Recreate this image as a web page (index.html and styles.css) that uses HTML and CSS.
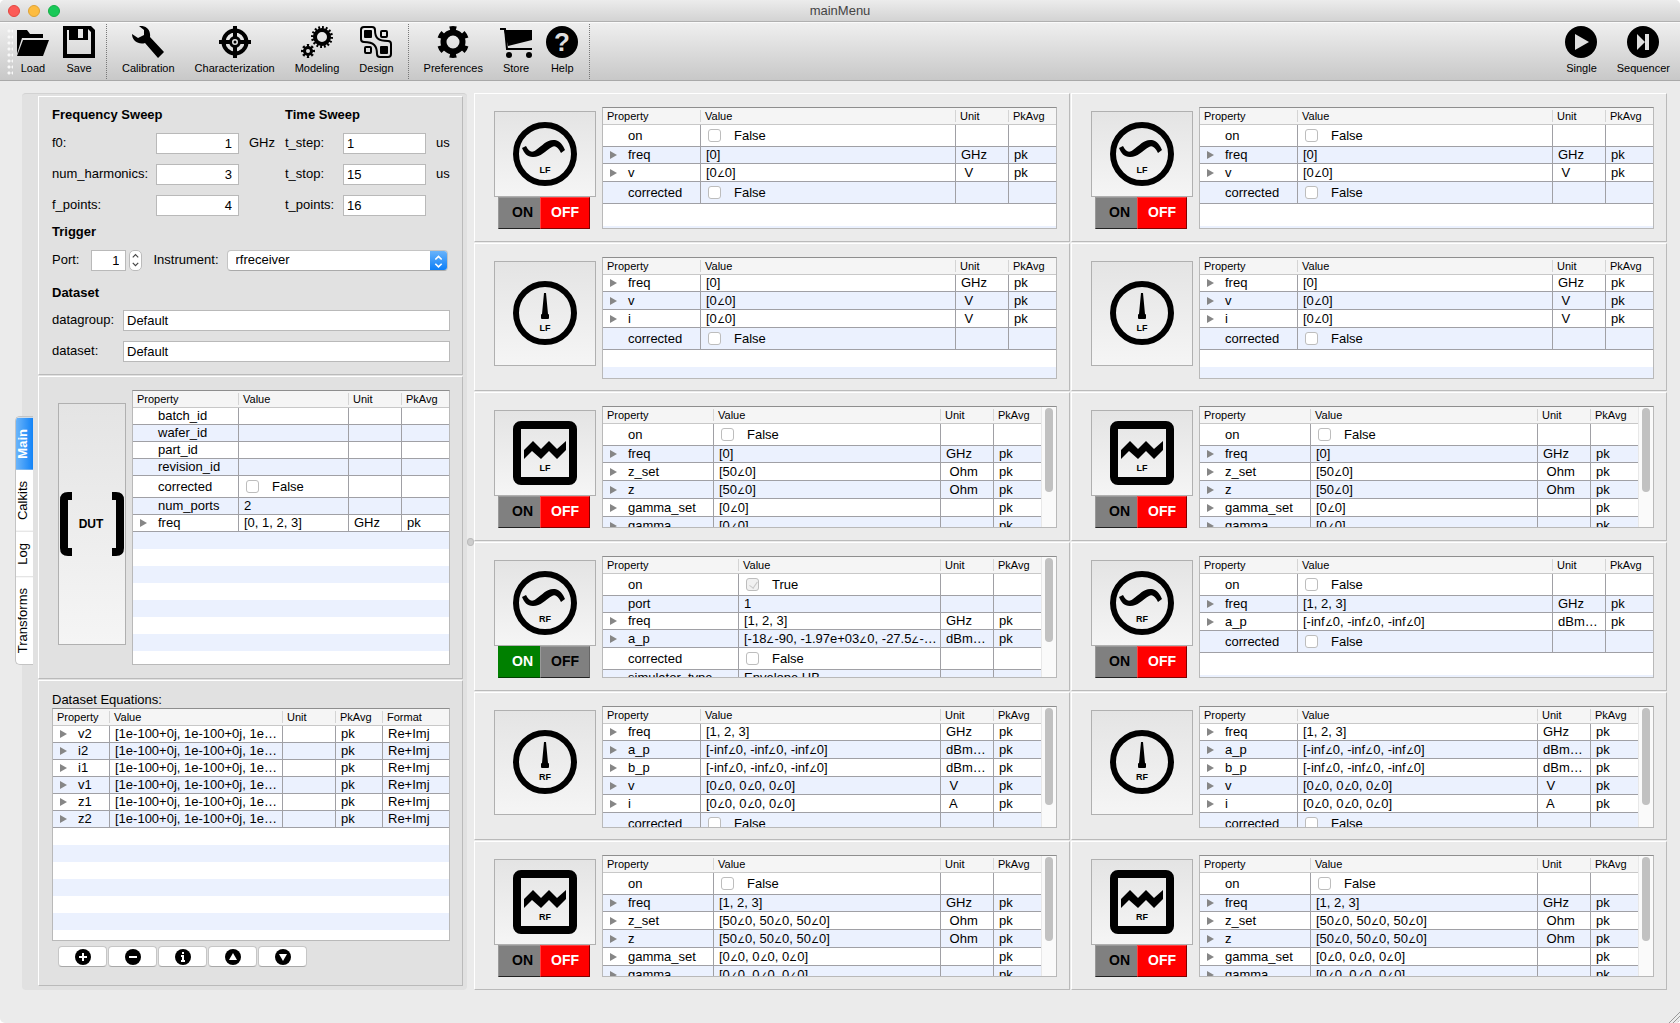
FILE: index.html
```html
<!DOCTYPE html>
<html lang="en">
<head>
  <meta charset="UTF-8" />
  <meta name="viewport" content="width=device-width, initial-scale=1.0"/>
  <title>mainMenu</title>
  <link rel="stylesheet" href="styles.css">
</head>
<body>

  <header class="titlebar">
    <div class="lights">
      <span class="light red"></span>
      <span class="light amber"></span>
      <span class="light green"></span>
    </div>
    <h1>mainMenu</h1>
    <div class="lights"></div>
  </header>

  <nav class="toolbar">
    <span class="grip"></span>
    <button type="button" class="tool">
      <svg viewBox="0 0 32 32"><path d="M0 4h10l3 4h13v4H5L0 28z"/><path d="M6 14h26l-6 16H0z"/></svg>
      Load
    </button>
    <button type="button" class="tool">
      <svg viewBox="0 0 32 32"><path fill-rule="evenodd" d="M0 0h28l4 4v28H0zM4 4v24h24V6l-3-3v11H6V4zM15 3v9h5V3z"/></svg>
      Save
    </button>
    <span class="separator"></span>
    <button type="button" class="tool">
      <svg viewBox="0 0 32 32"><path d="M7 0C14-1 19 4 18 11L32 26 26 32 13 17C7 19 0 15 0 8L6 12 12 9 12 4z"/></svg>
      Calibration
    </button>
    <button type="button" class="tool">
      <svg viewBox="0 0 32 32"><g fill="none" stroke="#000"><circle cx="16" cy="16" r="11.5" stroke-width="4"/><circle cx="16" cy="16" r="4.5" stroke-width="3"/><path d="M16 0v13M16 19v13M0 16h13M19 16h13" stroke-width="4"/></g><circle cx="16" cy="16" r="1.5"/></svg>
      Characterization
    </button>
    <button type="button" class="tool">
      <svg viewBox="0 0 32 32"><g fill="none" stroke="#000"><circle cx="21" cy="11" r="7" stroke-width="4"/><circle cx="21" cy="11" r="9.5" stroke-width="3" pathLength="32" stroke-dasharray="1 1"/><circle cx="7" cy="25" r="3.5" stroke-width="3"/><circle cx="7" cy="25" r="5.5" stroke-width="3" pathLength="16" stroke-dasharray="1 1" stroke-dashoffset=".5"/></g></svg>
      Modeling
    </button>
    <button type="button" class="tool">
      <svg viewBox="0 0 32 32"><rect x="4" y="4" width="8" height="8" rx="1"/><rect x="20" y="20" width="8" height="8" rx="1"/><g fill="none" stroke="#000" stroke-width="2"><path d="M4 1h8q3 0 3 3C15 12 18 15 28 15q3 0 3 3v10q0 3-3 3h-8q-3 0-3-3C17 20 14 16 4 16q-3 0-3-3V4q0-3 3-3z"/><rect x="21" y="5" width="6" height="6" rx="1"/><rect x="5" y="21" width="6" height="6" rx="1"/></g></svg>
      Design
    </button>
    <span class="separator"></span>
    <button type="button" class="tool">
      <svg viewBox="0 0 32 32"><g fill="none" stroke="#000"><circle cx="16" cy="16" r="9.5" stroke-width="6"/><circle cx="16" cy="16" r="13.5" stroke-width="5" pathLength="60" stroke-dasharray="4.6 5.4" stroke-dashoffset="-2.7"/></g></svg>
      Preferences
    </button>
    <button type="button" class="tool">
      <svg viewBox="0 0 32 32"><path d="M4 4h28v10L8 20z"/><path d="M0 3h5l2 20h25" fill="none" stroke="#000" stroke-width="2"/><circle cx="9" cy="29" r="3"/><circle cx="29" cy="29" r="3"/></svg>
      Store
    </button>
    <button type="button" class="tool">
      <svg viewBox="0 0 32 32"><circle cx="16" cy="16" r="16"/><text x="16" y="25" class="question">?</text></svg>
      Help
    </button>
    <span class="separator"></span>
    <span class="spacer"></span>
    <button type="button" class="tool">
      <svg viewBox="0 0 32 32"><circle cx="16" cy="16" r="16"/><path fill="#e0e0e0" d="M10 8l14 8-14 8z"/></svg>
      Single
    </button>
    <button type="button" class="tool">
      <svg viewBox="0 0 32 32"><circle cx="16" cy="16" r="16"/><path fill="#e0e0e0" d="M10 8l8 8-8 8zM18 8h4v16h-4z"/></svg>
      Sequencer
    </button>
  </nav>

  <main class="workspace">
    <div class="tabs" role="tablist">
      <button type="button" role="tab" aria-selected="false">Transforms</button>
      <button type="button" role="tab" aria-selected="false">Log</button>
      <button type="button" role="tab" aria-selected="false">Calkits</button>
      <button type="button" role="tab" aria-selected="true">Main</button>
    </div>

    <div class="sidebar">
      <section class="panel settings">
        <div class="sweeps">
          <h2 class="freq-head">Frequency Sweep</h2>
          <h2 class="time-head">Time Sweep</h2>

          <label for="f0">f0:</label>
          <input type="text" class="num" id="f0" value="1">
          <span class="unit">GHz</span>
          <label for="t_step">t_step:</label>
          <input type="text" id="t_step" value="1">
          <span class="unit">us</span>

          <label for="num_harmonics">num_harmonics:</label>
          <input type="text" class="num" id="num_harmonics" value="3">
          <span></span>
          <label for="t_stop">t_stop:</label>
          <input type="text" id="t_stop" value="15">
          <span class="unit">us</span>

          <label for="f_points">f_points:</label>
          <input type="text" class="num" id="f_points" value="4">
          <span></span>
          <label for="t_points">t_points:</label>
          <input type="text" id="t_points" value="16">
          <span></span>
        </div>

        <h2>Trigger</h2>
        <div class="trigger">
          <label for="port">Port:</label>
          <input type="text" class="num" id="port" value="1">
          <button type="button" class="stepper" aria-label="Change port">
            <svg viewBox="0 0 12 20"><path d="M3 7l3-3 3 3M3 13l3 3 3-3"/></svg>
          </button>
          <label for="instrument">Instrument:</label>
          <span class="dropdown">
            <select id="instrument"><option>rfreceiver</option></select>
            <span class="cap"><svg viewBox="0 0 16 20"><path d="M5 8l3-3 3 3M5 12l3 3 3-3"/></svg></span>
          </span>
        </div>

        <h2 class="dataset-head">Dataset</h2>
        <div class="dataset">
          <label for="datagroup">datagroup:</label>
          <input type="text" id="datagroup" value="Default">
          <label for="dataset">dataset:</label>
          <input type="text" id="dataset" value="Default">
        </div>
      </section>

      <section class="panel dut">
        <button type="button" class="picture">
          <svg viewBox="0 0 64 64"><path d="M12 0v8H8v48h4v8H8q-8 0-8-8V8q0-8 8-8zM52 0v8h4v48h-4v8h4q8 0 8-8V8q0-8-8-8z"/><text x="31" y="36">DUT</text></svg>
        </button>
        <div class="tree" id="dut-tree"></div>
      </section>

      <section class="panel equations">
        <h2 class="plain">Dataset Equations:</h2>
        <div class="tree" id="equations-tree"></div>
        <div class="actions">
          <button type="button" aria-label="Add"><svg viewBox="0 0 16 16"><circle cx="8" cy="8" r="8"/><path d="M8 4v8M4 8h8"/></svg></button>
          <button type="button" aria-label="Remove"><svg viewBox="0 0 16 16"><circle cx="8" cy="8" r="8"/><path d="M4 8h8"/></svg></button>
          <button type="button" aria-label="Info"><svg viewBox="0 0 16 16"><circle cx="8" cy="8" r="8"/><path d="M8 3v2M6 7h2v5M6 12h4"/></svg></button>
          <button type="button" aria-label="Move up"><svg viewBox="0 0 16 16"><circle cx="8" cy="8" r="8"/><path class="solid" d="M8 4l4 7H4z"/></svg></button>
          <button type="button" aria-label="Move down"><svg viewBox="0 0 16 16"><circle cx="8" cy="8" r="8"/><path class="solid" d="M8 12l4-7H4z"/></svg></button>
        </div>
      </section>
    </div>

    <div class="splitter"></div>

    <div class="devices" id="devices"></div>
  </main>

  <footer class="statusbar">
    <svg viewBox="0 0 12 12"><path d="M1 12L12 1M5 12l7-7M9 12l3-3"/></svg>
  </footer>

  <script src="script.js"></script>
</body>
</html>
```
FILE: styles.css
```css
* {
  box-sizing: border-box;
}

html {
  background: #fff;
}

body {
  margin: 0;
  min-height: 100vh;
  display: flex;
  flex-direction: column;
  background: #ebebeb;
  border-radius: 5px;
  overflow: hidden;
  color: #000;
  font-family: "Liberation Sans", Arial, sans-serif;
  font-size: 13px;
  line-height: 16px;
}

button,
input,
select {
  font: inherit;
  color: inherit;
  margin: 0;
}

h1,
h2 {
  margin: 0;
  font-size: 13px;
  line-height: 16px;
}

svg {
  display: block;
}

/* Title bar */
.titlebar {
  display: flex;
  justify-content: space-between;
  align-items: center;
  height: 22px;
  padding: 0 8px;
  background: linear-gradient(#ececec, #d3d3d3);
  border-bottom: 1px solid #b0b0b0;
}

.titlebar h1 {
  color: #444;
  font-weight: normal;
}

.lights {
  display: flex;
  gap: 8px;
  width: 52px;
}

.light {
  width: 12px;
  height: 12px;
  border-radius: 50%;
}

.red {
  background: #fc5b57;
  border: 1px solid #e2463f;
}

.amber {
  background: #fdbc40;
  border: 1px solid #dea236;
}

.green {
  background: #19c958;
  border: 1px solid #14ae46;
}

/* Toolbar */
.toolbar {
  display: flex;
  height: 59px;
  padding: 0 0 0 7px;
  background: linear-gradient(#efefef, #c8c8c8);
  border-top: 1px solid #fafafa;
  border-bottom: 1px solid #a9a9a9;
}

.grip {
  width: 6px;
  margin: 5px 0;
  margin-right: -3px;
  background: radial-gradient(circle, #f8f8f8 1px, transparent 2px) 0 0 / 4px 6px;
}

.tool {
  display: flex;
  flex-direction: column;
  align-items: center;
  min-width: 46px;
  padding: 3px 10px 0;
  border: none;
  background: none;
  font-size: 11px;
  line-height: 13px;
}

.tool svg {
  width: 32px;
  height: 32px;
  margin: 0 -3px 4px;
}

.question {
  fill: #dedede;
  font-size: 26px;
  font-weight: bold;
  text-anchor: middle;
}

.separator {
  margin: 1px 5px 1px 4px;
  border-left: 1px dotted #777;
}

.spacer {
  flex: 1;
}

/* Main area */
.workspace {
  flex: 1;
  display: flex;
  align-items: stretch;
  padding: 12px 13px 0 15px;
}

.tabs {
  display: flex;
  flex-direction: column-reverse;
  align-self: center;
  z-index: 1;
  width: 18px;
  margin: 0 -11px 2px 0;
  border: 1px solid #c4c4c4;
  border-right: none;
  border-radius: 5px 0 0 5px;
  background: #fff;
  overflow: hidden;
}

.tabs button {
  writing-mode: vertical-rl;
  transform: rotate(180deg);
  width: 17px;
  padding: 11px 0 11px 3px;
  border: none;
  border-bottom: 1px solid #ddd;
  background: none;
  font-size: 13px;
  line-height: 14px;
}

.tabs button[aria-selected="true"] {
  background: linear-gradient(to left, #6cb5fa, #1283f7);
  color: #fff;
  font-weight: bold;
}

.sidebar {
  display: flex;
  flex-direction: column;
  width: 445px;
  padding: 2px 4px 3px 16px;
  background: #e1e1e1;
  border-top: 1px solid #d2d2d2;
  border-radius: 4px;
}

.panel {
  border: 1px solid #fff;
  border-right-color: #bababa;
  border-bottom-color: #bababa;
  min-width: 0;
}

.sidebar .panel {
  flex: 1 1 0;
  margin-bottom: 1px;
}

.sidebar .settings {
  flex: none;
  padding: 10px 12px 12px 13px;
}

.settings h2 {
  margin: 8px 0 10px;
}

.settings input {
  height: 21px;
  min-width: 0;
  padding: 0 4px 1px 3px;
  border: 1px solid #b9b9b9;
  background: #fff;
}

.settings label,
.settings .unit {
  padding-bottom: 1px;
}

.settings .num {
  padding-right: 6px;
  text-align: right;
}

.sweeps {
  display: grid;
  grid-template-columns: 104px 83px 46px 58px 83px auto;
  row-gap: 10px;
  align-items: center;
}

.sweeps h2 {
  margin: 0;
}

.freq-head {
  grid-column: span 3;
}

.time-head {
  grid-column: span 3;
}

.unit {
  padding-left: 10px;
}

.trigger {
  display: flex;
  align-items: center;
}

.trigger input {
  width: 35px;
  margin-left: 12px;
}

.trigger .stepper {
  width: 13px;
  height: 21px;
  margin: 0 11px 0 3px;
  padding: 0;
  border: 1px solid #bbb;
  border-radius: 5px;
  background: #fff;
}

.stepper path {
  fill: none;
  stroke: #444;
  stroke-width: 1.3;
}

.dropdown {
  display: flex;
  flex: 1;
  height: 21px;
  margin: 0 2px 0 8px;
  border: 1px solid #c4c4c4;
  border-bottom-color: #aaa;
  border-radius: 4px;
  background: #fff;
  overflow: hidden;
}

.dropdown select {
  flex: 1;
  appearance: none;
  padding: 0 8px 2px;
  border: none;
  background: none;
}

.cap {
  width: 17px;
  background: linear-gradient(#69b3fa, #0d7ff8);
}

.cap path {
  fill: none;
  stroke: #fff;
  stroke-width: 1.5;
}

.settings .dataset-head {
  margin: 14px 0 9px;
}

.dataset {
  display: grid;
  grid-template-columns: 71px 1fr;
  row-gap: 10px;
  align-items: center;
}

/* Property trees */
.tree {
  display: flex;
  min-width: 0;
  border: 1px solid #b9b9b9;
  border-top-color: #8e8e8e;
  background: #fff;
  overflow: hidden;
}

.rows {
  display: flex;
  flex: 1;
  flex-direction: column;
  min-width: 0;
}

.tree table {
  width: 100%;
  flex: none;
  table-layout: fixed;
  border-collapse: separate;
  border-spacing: 0;
}

.tree th {
  height: 17px;
  padding: 0 0 0 4px;
  border-bottom: 1px solid #c8c8c8;
  background: #f5f5f5 linear-gradient(#d4d4d4, #d4d4d4) no-repeat right center / 1px 12px;
  font-size: 11px;
  font-weight: normal;
  line-height: 16px;
  text-align: left;
}

.tree th:last-child {
  background: #f5f5f5;
}

.tree td {
  padding: 0 0 0 5px;
  border-right: 1px solid #a0a0a5;
  border-bottom: 1px solid #a0a0a5;
  line-height: 16px;
  white-space: pre;
  overflow: hidden;
}

.tree td:last-child {
  border-right: none;
}

.tree tr:nth-child(even) td {
  background: #ebf1fe;
}

.tree .tall td {
  line-height: 17px;
}

.tree .check td {
  line-height: 21px;
}

.tree td:first-child {
  padding-left: 25px;
}

.tree .parent td:first-child {
  padding-left: 7px;
}

.parent td:first-child::before {
  content: "";
  display: inline-block;
  margin-right: 11px;
  border: 4px solid transparent;
  border-left: 7px solid #868686;
  border-right: none;
}

.tree label {
  display: flex;
  align-items: center;
}

.tree input {
  appearance: none;
  width: 13px;
  height: 13px;
  margin: 0 13px 0 2px;
  border: 1px solid #bdbdbd;
  border-radius: 3px;
  background: #fff;
}

.tree input:checked {
  background: #f1f1f1;
}

.tree input:checked::before {
  content: "";
  display: block;
  width: 4px;
  height: 7px;
  margin: 1px 0 0 4px;
  border: solid #c8c8c8;
  border-width: 0 1px 1px 0;
  transform: rotate(35deg);
}

.angle {
  font-size: 9px;
  line-height: 9px;
}

.filler {
  flex: 1;
  background: repeating-linear-gradient(#fff 0 17px, #ebf1fe 17px 34px);
}

.filler.blue-first {
  background: repeating-linear-gradient(#ebf1fe 0 17px, #fff 17px 34px);
}

.filler.deep {
  background: repeating-linear-gradient(#fff 0 22px, #ebf1fe 22px 44px);
}

.scroll {
  width: 15px;
  padding: 1px 3px;
  border-left: 1px solid #e8e8e8;
  background: #fafafa;
}

.thumb {
  width: 8px;
  border-radius: 4px;
  background: #c1c1c1;
}

/* Picture buttons */
.picture {
  display: flex;
  align-items: center;
  justify-content: center;
  padding: 0;
  border: 1px solid #b0b0b0;
  background: linear-gradient(#e4e4e4, #f5f5f5);
}

.picture svg {
  width: 64px;
  height: 64px;
}

.picture text {
  font-size: 9px;
  font-weight: bold;
  text-anchor: middle;
}

.dut {
  display: flex;
  padding: 13px 12px 13px 19px;
}

.dut .picture {
  width: 68px;
  margin: 13px 6px 20px 0;
}

.dut .picture text {
  font-size: 12px;
}

.dut .tree {
  flex: 1;
}

.equations {
  display: flex;
  flex-direction: column;
  padding: 11px 12px 18px 13px;
}

.equations .plain {
  font-weight: normal;
}

.equations .tree {
  flex: 1;
}

.actions {
  display: flex;
  gap: 1px;
  margin: 5px 6px 0;
}

.actions button {
  display: flex;
  align-items: center;
  justify-content: center;
  width: 49px;
  height: 21px;
  padding: 0;
  border: 1px solid #c6c6c6;
  border-bottom-color: #a8a8a8;
  border-radius: 4px;
  background: #fff;
}

.actions svg {
  width: 16px;
  height: 16px;
}

.actions path {
  fill: none;
  stroke: #fff;
  stroke-width: 2;
}

.actions .solid {
  fill: #fff;
  stroke: none;
}

/* Splitter handle between the two halves */
.splitter {
  display: flex;
  align-items: center;
  width: 7px;
}

.splitter::before {
  content: "";
  width: 6px;
  height: 6px;
  border-radius: 50%;
  background: #cdcdcd;
  border: 1px solid #bbb;
}

/* Instrument grid */
.devices {
  flex: 1;
  display: grid;
  grid-template-columns: 1fr 1fr;
  gap: 1px;
  min-width: 0;
}

.device {
  display: flex;
  padding: 13px 12px 11px 19px;
}

.side {
  display: flex;
  flex-direction: column;
  width: 102px;
  height: 122px;
  padding-top: 4px;
  margin-right: 6px;
}

.side .picture {
  flex: 1;
}

.meter .side {
  padding-bottom: 13px;
}

.device .tree {
  flex: 1;
  height: 122px;
}

.switch {
  display: flex;
  height: 32px;
  margin: 0 6px 0 4px;
}

.switch button {
  flex: 0 0 50px;
  padding: 0 0 2px;
  border: 1px solid;
  border-color: #999 #666 #222 #999;
  background: #808080;
  font-size: 14px;
  font-weight: bold;
}

.switch button:first-child {
  flex-basis: 42px;
  padding-left: 6px;
  border-right: none;
}

.switch .is-on {
  border-color: #008000 #008000 #004000;
  background: #008000;
  color: #fff;
}

.switch .is-off {
  border-color: #ff4040 #800000 #800000 #ff4040;
  background: #f00;
  color: #fff;
}

/* Resize corner */
.statusbar {
  display: flex;
  justify-content: flex-end;
  align-items: flex-end;
  height: 33px;
}

.statusbar svg {
  width: 12px;
  height: 12px;
}

.statusbar path {
  fill: none;
  stroke: #999;
}
```
FILE: script.js
```js
const HEAD = ['Property', 'Value', 'Unit', 'PkAvg'];

// A row is [name, value, unit, pkavg, format]; true/false values become tick boxes,
// a leading ">" marks a row that can be expanded.
function rowHtml(row, columns) {
  const isCheck = typeof row[1] === 'boolean';
  const isParent = row[0][0] === '>';
  const classes = [];
  if (isCheck) classes.push('check');
  if (isParent) classes.push('parent');
  if (!isCheck && row[1].includes('∠')) classes.push('tall');

  let cells = '';
  for (let i = 0; i < columns; i++) {
    let text = row[i] === undefined ? '' : row[i];
    if (i === 0) text = text.replace('>', '');
    if (i === 1 && isCheck) {
      text = `<label><input type="checkbox"${text ? ' checked' : ''}>${text ? 'True' : 'False'}</label>`;
    } else if (i === 1) {
      text = text.replaceAll('∠', '<span class="angle">∠</span>');
    }
    cells += `<td>${text}</td>`;
  }
  return `<tr class="${classes.join(' ')}">${cells}</tr>`;
}

function treeHtml(rows, widths, head = HEAD, filler = '', thumb = 0) {
  const cols = widths.map(w => w ? `<col style="width:${w}px">` : '<col>').join('');
  const ths = head.map(h => `<th>${h}</th>`).join('');
  const body = rows.map(r => rowHtml(r, head.length)).join('');
  const scroll = thumb ? `<div class="scroll"><div class="thumb" style="height:${thumb}px"></div></div>` : '';
  return `<div class="rows"><table><colgroup>${cols}</colgroup><thead><tr>${ths}</tr></thead>` +
    `<tbody>${body}</tbody></table><div class="filler ${filler}"></div></div>${scroll}`;
}

document.getElementById('dut-tree').innerHTML = treeHtml([
  ['batch_id', ''],
  ['wafer_id', ''],
  ['part_id', ''],
  ['revision_id', ''],
  ['corrected', false],
  ['num_ports', '2'],
  ['>freq', '[0, 1, 2, 3]', 'GHz', 'pk']
], [106, 0, 53, 47], HEAD, 'blue-first');

document.getElementById('equations-tree').innerHTML = treeHtml(
  ['v2', 'i2', 'i1', 'v1', 'z1', 'z2'].map(n => ['>' + n, '[1e-100+0j, 1e-100+0j, 1e…', '', 'pk', 'Re+Imj']),
  [57, 0, 53, 47, 66], [...HEAD, 'Format']);

const SHAPES = {
  source: '<circle cx="32" cy="32" r="29" fill="none" stroke="#000" stroke-width="6"/>' +
    '<path d="M9 26L13 24C16 30 19 31 23 28C30 23 34 17 42 18C47 19 50 23 52 28L48 31C45 25 42 23 39 25C32 29 28 35 20 35C14 35 11 31 9 26z"/>',
  meter: '<circle cx="32" cy="32" r="29" fill="none" stroke="#000" stroke-width="6"/>' +
    '<path d="M31 12h2l2 21q1 0 1 1v3q0 1-1 1h-6q-1 0-1-1v-3q0-1 1-1z"/>',
  tuner: '<rect x="4" y="4" width="56" height="56" rx="4" fill="none" stroke="#000" stroke-width="8"/>' +
    '<path d="M11 29L20 20 28 28 36 20 44 28 53 20V29L44 38 36 30 28 38 19 30 11 38z"/>'
};

const lfSource = [['on', false], ['>freq', '[0]', 'GHz', 'pk'], ['>v', '[0∠0]', ' V', 'pk'], ['corrected', false]];
const lfMeter = [
  ['>freq', '[0]', 'GHz', 'pk'],
  ['>v', '[0∠0]', ' V', 'pk'],
  ['>i', '[0∠0]', ' V', 'pk'],
  ['corrected', false]
];
const lfTuner = [
  ['on', false],
  ['>freq', '[0]', 'GHz', 'pk'],
  ['>z_set', '[50∠0]', ' Ohm', 'pk'],
  ['>z', '[50∠0]', ' Ohm', 'pk'],
  ['>gamma_set', '[0∠0]', '', 'pk'],
  ['>gamma', '[0∠0]', '', 'pk']
];
const rfSource1 = [
  ['on', true],
  ['port', '1'],
  ['>freq', '[1, 2, 3]', 'GHz', 'pk'],
  ['>a_p', '[-18∠-90, -1.97e+03∠0, -27.5∠-…', 'dBm…', 'pk'],
  ['corrected', false],
  ['simulator_type', 'Envelope HB']
];
const rfSource2 = [
  ['on', false],
  ['>freq', '[1, 2, 3]', 'GHz', 'pk'],
  ['>a_p', '[-inf∠0, -inf∠0, -inf∠0]', 'dBm…', 'pk'],
  ['corrected', false]
];
const rfMeter = [
  ['>freq', '[1, 2, 3]', 'GHz', 'pk'],
  ['>a_p', '[-inf∠0, -inf∠0, -inf∠0]', 'dBm…', 'pk'],
  ['>b_p', '[-inf∠0, -inf∠0, -inf∠0]', 'dBm…', 'pk'],
  ['>v', '[0∠0, 0∠0, 0∠0]', ' V', 'pk'],
  ['>i', '[0∠0, 0∠0, 0∠0]', ' A', 'pk'],
  ['corrected', false]
];
const rfTuner = [
  ['on', false],
  ['>freq', '[1, 2, 3]', 'GHz', 'pk'],
  ['>z_set', '[50∠0, 50∠0, 50∠0]', ' Ohm', 'pk'],
  ['>z', '[50∠0, 50∠0, 50∠0]', ' Ohm', 'pk'],
  ['>gamma_set', '[0∠0, 0∠0, 0∠0]', '', 'pk'],
  ['>gamma', '[0∠0, 0∠0, 0∠0]', '', 'pk']
];

const devices = [
  { kind: 'source', band: 'LF', rows: lfSource, first: 98, filler: 'deep' },
  { kind: 'source', band: 'LF', rows: lfSource, first: 98, filler: 'deep' },
  { kind: 'meter', band: 'LF', rows: lfMeter, first: 98 },
  { kind: 'meter', band: 'LF', rows: lfMeter, first: 98 },
  { kind: 'tuner', band: 'LF', rows: lfTuner, first: 111, thumb: 84 },
  { kind: 'tuner', band: 'LF', rows: lfTuner, first: 111, thumb: 84 },
  { kind: 'source', band: 'RF', rows: rfSource1, first: 136, thumb: 84, on: true },
  { kind: 'source', band: 'RF', rows: rfSource2, first: 98, filler: 'deep' },
  { kind: 'meter', band: 'RF', rows: rfMeter, first: 98, thumb: 97 },
  { kind: 'meter', band: 'RF', rows: rfMeter, first: 98, thumb: 97 },
  { kind: 'tuner', band: 'RF', rows: rfTuner, first: 111, thumb: 84 },
  { kind: 'tuner', band: 'RF', rows: rfTuner, first: 111, thumb: 84 }
];

document.getElementById('devices').innerHTML = devices.map(d => {
  const toggle = d.kind === 'meter' ? '' :
    `<div class="switch"><button type="button" class="${d.on ? 'is-on' : ''}">ON</button>` +
    `<button type="button" class="${d.on ? '' : 'is-off'}">OFF</button></div>`;
  const textY = d.kind === 'source' ? 51 : 50;
  return `<section class="panel device ${d.kind}">
    <div class="side">
      <button type="button" class="picture"><svg viewBox="0 0 64 64">${SHAPES[d.kind]}<text x="32" y="${textY}">${d.band}</text></svg></button>
      ${toggle}
    </div>
    <div class="tree">${treeHtml(d.rows, [d.first, 0, 53, 47], HEAD, d.filler, d.thumb)}</div>
  </section>`;
}).join('');
```
